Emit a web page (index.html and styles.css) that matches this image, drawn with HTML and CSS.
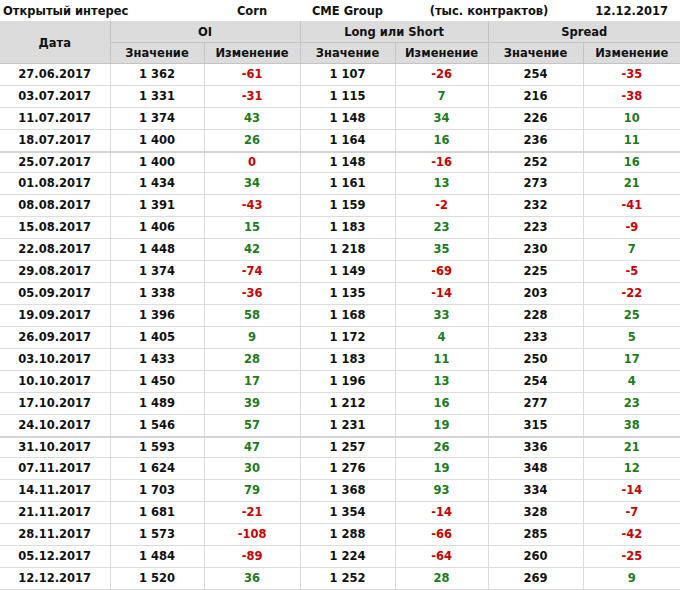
FILE: index.html
```html
<!DOCTYPE html>
<html lang="ru">
<head>
<meta charset="utf-8">
<title>Открытый интерес</title>
<link rel="stylesheet" href="styles.css">
</head>
<body>
<table class="oi">
<colgroup>
<col class="c-date"><col class="c1"><col class="c2"><col class="c3"><col class="c4"><col class="c5"><col class="c6">
</colgroup>
<thead>
<tr class="title">
<td colspan="2" class="left">Открытый интерес</td>
<td>Corn</td>
<td>CME Group</td>
<td colspan="2">(тыс. контрактов)</td>
<td>12.12.2017</td>
</tr>
<tr class="head">
<th rowspan="2">Дата</th>
<th colspan="2">OI</th>
<th colspan="2">Long или Short</th>
<th colspan="2">Spread</th>
</tr>
<tr class="head">
<th>Значение</th><th>Изменение</th>
<th>Значение</th><th>Изменение</th>
<th>Значение</th><th>Изменение</th>
</tr>
</thead>
<tbody>
<tr><td>27.06.2017</td><td>1 362</td><td class="neg">-61</td><td>1 107</td><td class="neg">-26</td><td>254</td><td class="neg">-35</td></tr>
<tr><td>03.07.2017</td><td>1 331</td><td class="neg">-31</td><td>1 115</td><td class="pos">7</td><td>216</td><td class="neg">-38</td></tr>
<tr><td>11.07.2017</td><td>1 374</td><td class="pos">43</td><td>1 148</td><td class="pos">34</td><td>226</td><td class="pos">10</td></tr>
<tr><td>18.07.2017</td><td>1 400</td><td class="pos">26</td><td>1 164</td><td class="pos">16</td><td>236</td><td class="pos">11</td></tr>
<tr class="sep"><td>25.07.2017</td><td>1 400</td><td class="neg">0</td><td>1 148</td><td class="neg">-16</td><td>252</td><td class="pos">16</td></tr>
<tr><td>01.08.2017</td><td>1 434</td><td class="pos">34</td><td>1 161</td><td class="pos">13</td><td>273</td><td class="pos">21</td></tr>
<tr><td>08.08.2017</td><td>1 391</td><td class="neg">-43</td><td>1 159</td><td class="neg">-2</td><td>232</td><td class="neg">-41</td></tr>
<tr><td>15.08.2017</td><td>1 406</td><td class="pos">15</td><td>1 183</td><td class="pos">23</td><td>223</td><td class="neg">-9</td></tr>
<tr><td>22.08.2017</td><td>1 448</td><td class="pos">42</td><td>1 218</td><td class="pos">35</td><td>230</td><td class="pos">7</td></tr>
<tr><td>29.08.2017</td><td>1 374</td><td class="neg">-74</td><td>1 149</td><td class="neg">-69</td><td>225</td><td class="neg">-5</td></tr>
<tr><td>05.09.2017</td><td>1 338</td><td class="neg">-36</td><td>1 135</td><td class="neg">-14</td><td>203</td><td class="neg">-22</td></tr>
<tr><td>19.09.2017</td><td>1 396</td><td class="pos">58</td><td>1 168</td><td class="pos">33</td><td>228</td><td class="pos">25</td></tr>
<tr><td>26.09.2017</td><td>1 405</td><td class="pos">9</td><td>1 172</td><td class="pos">4</td><td>233</td><td class="pos">5</td></tr>
<tr><td>03.10.2017</td><td>1 433</td><td class="pos">28</td><td>1 183</td><td class="pos">11</td><td>250</td><td class="pos">17</td></tr>
<tr><td>10.10.2017</td><td>1 450</td><td class="pos">17</td><td>1 196</td><td class="pos">13</td><td>254</td><td class="pos">4</td></tr>
<tr><td>17.10.2017</td><td>1 489</td><td class="pos">39</td><td>1 212</td><td class="pos">16</td><td>277</td><td class="pos">23</td></tr>
<tr><td>24.10.2017</td><td>1 546</td><td class="pos">57</td><td>1 231</td><td class="pos">19</td><td>315</td><td class="pos">38</td></tr>
<tr class="sep"><td>31.10.2017</td><td>1 593</td><td class="pos">47</td><td>1 257</td><td class="pos">26</td><td>336</td><td class="pos">21</td></tr>
<tr><td>07.11.2017</td><td>1 624</td><td class="pos">30</td><td>1 276</td><td class="pos">19</td><td>348</td><td class="pos">12</td></tr>
<tr><td>14.11.2017</td><td>1 703</td><td class="pos">79</td><td>1 368</td><td class="pos">93</td><td>334</td><td class="neg">-14</td></tr>
<tr><td>21.11.2017</td><td>1 681</td><td class="neg">-21</td><td>1 354</td><td class="neg">-14</td><td>328</td><td class="neg">-7</td></tr>
<tr><td>28.11.2017</td><td>1 573</td><td class="neg">-108</td><td>1 288</td><td class="neg">-66</td><td>285</td><td class="neg">-42</td></tr>
<tr><td>05.12.2017</td><td>1 484</td><td class="neg">-89</td><td>1 224</td><td class="neg">-64</td><td>260</td><td class="neg">-25</td></tr>
<tr><td>12.12.2017</td><td>1 520</td><td class="pos">36</td><td>1 252</td><td class="pos">28</td><td>269</td><td class="pos">9</td></tr>
</tbody>
</table>
</body>
</html>
```
FILE: styles.css
```css
html, body {
  margin: 0;
  padding: 0;
  background: #ffffff;
}

.oi {
  width: 680px;
  border-collapse: collapse;
  table-layout: fixed;
  font-family: "DejaVu Sans", Verdana, sans-serif;
  font-size: 11.5px;
  font-weight: bold;
  color: #111111;
}

.c-date { width: 110px; }
.c1 { width: 94px; }
.c2 { width: 96px; }
.c3 { width: 95px; }
.c4 { width: 93px; }
.c5 { width: 95px; }
.c6 { width: 97px; }

.oi td, .oi th {
  padding: 0;
  text-align: center;
  white-space: nowrap;
  height: 21px;
  line-height: 21px;
}

.oi .title td {
  height: 19px;
  line-height: 19px;
  padding-top: 2px;
  border: none;
}

.oi .title .left {
  text-align: left;
  padding-left: 3px;
}

.oi .head th {
  background: #dcdcdc;
  font-weight: bold;
  height: 20px;
  line-height: 20px;
  border: 1px solid #c4c4c4;
}

.oi thead tr:nth-child(2) th {
  border-top: 1px solid #dcdcdc;
}

.oi thead th:first-child {
  border-left: none;
}

.oi thead tr:nth-child(2) th:last-child,
.oi thead tr:nth-child(3) th:last-child {
  border-right: none;
}

.oi tbody td {
  border: 1px solid #dcdcdc;
}

.oi tbody td:first-child {
  border-left: none;
}

.oi tbody td:last-child {
  border-right: none;
}

.oi tbody tr.sep td {
  border-top: 2px solid #d4d4d4;
  height: 19px;
  line-height: 19px;
}

.oi .neg { color: #c80000; }
.oi .pos { color: #207a1e; }
```
